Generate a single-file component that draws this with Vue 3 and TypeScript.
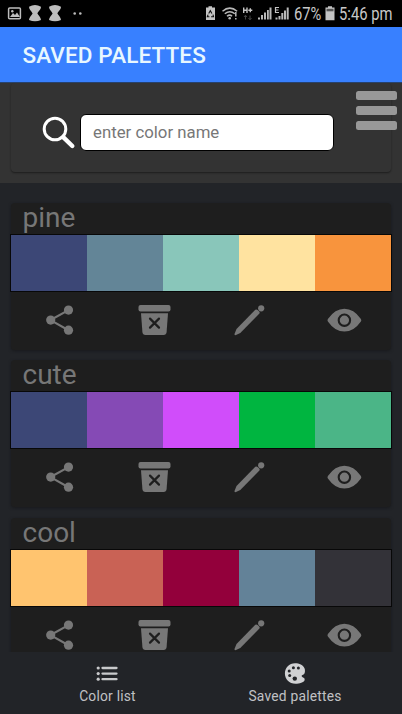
<script setup lang="ts">
interface Palette {
  name: string
  colors: string[]
}

const palettes: Palette[] = [
  { name: 'pine', colors: ['#3c4776', '#638597', '#89c6ba', '#ffe3a0', '#f8943d'] },
  { name: 'cute', colors: ['#3c4776', '#854ab5', '#d04dfa', '#00b540', '#4bb587'] },
  { name: 'cool', colors: ['#ffc46f', '#c96255', '#93003b', '#638298', '#333238'] },
]
</script>

<template>
  <div class="screen">
    <div class="status">
      <svg class="status-left" width="90" height="27" viewBox="0 0 90 27">
        <rect x="8.6" y="7.9" width="11.8" height="10.8" rx="1" fill="none" stroke="#bdbdbd" stroke-width="1.5" />
        <path d="M10 17l3-4 2 2 2-2.500 3 4.500z" fill="#bdbdbd" />
        <circle cx="12.300" cy="11.300" r="1.200" fill="#bdbdbd" />
        <g fill="#bdbdbd">
          <path d="M29 6.800q6-3.600 12 0c0 3-2.500 4.200-3.600 6.600 1.100 2.400 3.600 3.600 3.600 6.600q-6 2.500-12 0c0-3 2.500-4.200 3.600-6.600-1.100-2.400-3.600-3.600-3.600-6.600z" />
          <path d="M49 6.800q6-3.600 12 0c0 3-2.500 4.200-3.600 6.600 1.100 2.400 3.600 3.600 3.600 6.600q-6 2.500-12 0c0-3 2.500-4.200 3.600-6.600-1.100-2.400-3.600-3.600-3.600-6.600z" />
          <circle cx="74.700" cy="13.500" r="1.300" />
          <circle cx="80.300" cy="13.500" r="1.300" />
        </g>
      </svg>
      <svg class="signals" width="86" height="27" viewBox="204 0 86 27">
        <path d="M208.500 7.500V6.300h3.500v1.200h3V20h-9V7.500z" fill="#c4c4c4" />
        <path d="M208.700 13.500l1.600-2.800 1.600 2.800M213 14.700l.5 2.100h-2.400M209.400 16.800h-2.100l.8-2.200" fill="none" stroke="#111" stroke-width="1.100" />
        <g fill="none" stroke="#b8b8b8" stroke-width="1.500">
          <path d="M222.500 11.200q7.300-6.200 14.600 0M224.800 13.800q5-4.200 10 0M227 16.300q2.800-2.400 5 0" />
          <path d="M235.800 12v4.500M235.800 18v1.600" />
        </g>
        <circle cx="229.700" cy="18.300" r="1.300" fill="#b8b8b8" />
        <path d="M243.700 7.500v5.500M247 7.500v5.500M243.700 10.200h3.300M248.300 10.200h4M250.300 8.200v4" fill="none" stroke="#c4c4c4" stroke-width="1.400" />
        <path d="M245.500 15.500v4M244 17l1.500-1.800 1.500 1.800M250 15.500v4M248.500 18l1.500 1.800 1.500-1.800" fill="none" stroke="#444" />
        <g fill="#b8b8b8">
          <path d="M258 17.500h2v2h-2zM261 15h2v4.500h-2zM264 12.500h2v7h-2zM267 10h1.800v9.500H267zM269.500 7.500h2v12h-2z" />
          <path d="M275.500 17.500h2v2h-2zM278.500 16h2v3.500h-2zM281.300 13h2v6.500h-2zM284 10.500h2v9h-2zM286.700 7.500h2v12h-2z" />
        </g>
        <path d="M279 7.500h-3.500v5h3.500M275.500 10h3" fill="none" stroke="#c4c4c4" stroke-width="1.200" />
      </svg>
      <span class="percent">67%</span>
      <svg class="battery" width="10" height="27" viewBox="0 0 10 27">
        <path d="M3 7.500V6.300h4v1.200h2.500v12.700H.5V7.500z" fill="#c4c4c4" />
        <path d="M1.500 8.800h7v2.500h-7z" fill="#555" />
      </svg>
      <span class="clock">5:46 pm</span>
    </div>

    <header class="title-bar"><h1>SAVED PALETTES</h1></header>

    <section class="search">
      <div class="search-card">
        <svg class="search-icon" width="34" height="34" viewBox="0 0 34 34">
          <circle cx="13" cy="13" r="10.800" fill="none" stroke="#fff" stroke-width="3" />
          <path d="M21.200 21.200L30.300 30" stroke="#fff" stroke-width="4.400" stroke-linecap="round" />
        </svg>
        <input class="search-input" type="text" placeholder="enter color name" />
      </div>
      <button class="menu" aria-label="Menu"><i /><i /><i /></button>
    </section>

    <main class="list">
      <article v-for="palette in palettes" :key="palette.name" class="card">
        <h2>{{ palette.name }}</h2>
        <div class="swatches">
          <span v-for="color in palette.colors" :key="color" :style="{ background: color }" />
        </div>
        <div class="actions">
          <button aria-label="Share">
            <svg width="36" height="36" viewBox="0 0 36 36">
              <path d="M27.500 8.100L9.500 18.100l18 10.100" fill="none" stroke="#777" stroke-width="2.200" />
              <g fill="#777">
                <circle cx="27.500" cy="8.100" r="4.600" />
                <circle cx="9.700" cy="18.100" r="4.600" />
                <circle cx="27.500" cy="28.200" r="4.600" />
              </g>
            </svg>
          </button>
          <button aria-label="Delete">
            <svg width="36" height="36" viewBox="0 0 36 36">
              <rect x="2.500" y="3" width="32" height="6.600" rx="2" fill="#777" />
              <path d="M5 11.200h27l-1.400 18.800q-.3 3-3 3H9.400q-2.700 0-3-3z" fill="#777" />
              <path d="M14 16.600l9 9M23 16.600l-9 9" stroke="#1e1e1e" stroke-width="2.200" stroke-linecap="round" />
            </svg>
          </button>
          <button aria-label="Edit">
            <svg width="36" height="36" viewBox="0 0 36 36">
              <path d="M24.300 7.800q1.200-.8 2.300.2l1.600 1.600q1 1.100 0 2.200L9.300 30.900 5 33q-1.800.6-1.400-1.300l1.900-4.800z" fill="#777" />
              <circle cx="30.200" cy="6.300" r="3.100" fill="#777" />
            </svg>
          </button>
          <button aria-label="View">
            <svg width="36" height="36" viewBox="0 0 36 36">
              <path d="M1.900 17Q9 6.800 18.400 6.800T34.900 17q.9 1.200 0 2.400Q27.800 29.600 18.400 29.600T1.900 19.400q-.9-1.200 0-2.400z" fill="#777" />
              <circle cx="18.400" cy="18.200" r="5.700" fill="none" stroke="#1e1e1e" stroke-width="2.100" />
            </svg>
          </button>
        </div>
      </article>
    </main>

    <nav class="tabs">
      <a class="tab">
        <svg width="22" height="22" viewBox="0 0 22 22">
          <path d="M6.500 5h14M6.500 10.600h14M6.500 16.200h14" stroke="#c8c9cb" stroke-width="2.300" stroke-linecap="round" />
          <g fill="#c8c9cb"><circle cx="2.200" cy="5" r="1.600" /><circle cx="2.200" cy="10.600" r="1.600" /><circle cx="2.200" cy="16.200" r="1.600" /></g>
        </svg>
        <span>Color list</span>
      </a>
      <a class="tab">
        <svg width="22" height="22" viewBox="0 0 22 22">
          <path d="M20.800 6C19.200 1.900 15.200.3 11 .3 5.200.3.900 4.900.9 10.500S5.300 20.700 11.500 20.700c4 0 8.400-1.500 9.100-3.500.5-1.600-.7-2.300-2-2.900-1.500-.7-1.200-2.200.4-2.500 1.500-.3 2.400-2.600 1.800-5.800z" fill="#d0d1d3" />
          <g fill="#222428"><circle cx="9.400" cy="4.800" r="1.500" /><circle cx="14.400" cy="5" r="1.500" /><circle cx="5.200" cy="7.900" r="1.500" /><circle cx="5.700" cy="12.500" r="1.500" /><circle cx="10.800" cy="15.600" r="2.200" /></g>
        </svg>
        <span>Saved palettes</span>
      </a>
    </nav>
  </div>
</template>

<style>
body { margin: 0; background: #222428; }
</style>

<style scoped>
.screen {
  box-sizing: border-box;
  display: flex;
  flex-direction: column;
  width: 402px;
  height: 714px;
  overflow: hidden;
  background: #222428;
  font-family: Roboto, "Liberation Sans", sans-serif;
}
.status {
  display: flex;
  flex: none;
  height: 27px;
  background: #000;
  color: #c8c8c8;
  font-size: 17.500px;
  line-height: 28px;
  white-space: nowrap;
}
.status-left { margin-right: 114px; flex: none; }
.signals { flex: none; margin-right: 4px; }
.percent, .clock { transform-origin: left center; }
.percent { width: 31px; transform: scaleX(0.84); }
.battery { flex: none; margin-right: 4px; }
.clock { width: 60px; transform: scaleX(0.845); }
.title-bar {
  display: flex;
  flex: none;
  align-items: center;
  height: 56px;
  padding-left: 22.500px;
  box-sizing: border-box;
  background: #3880ff;
  border-bottom: 1px solid #28436e;
}
h1 { margin: 0; color: #e8f7ff; font-size: 22.500px; font-weight: 500; line-height: 28px; letter-spacing: 0.12px; }
.search {
  position: relative;
  flex: none;
  height: 100px;
  padding: 0 11px 11px;
  box-sizing: border-box;
  background: #333;
}
.search-card {
  display: flex;
  height: 89px;
  padding: 31px 0 0 31px;
  box-sizing: border-box;
  border-radius: 4px;
  box-shadow: 0 1px 2px rgba(0, 0, 0, 0.45);
}
.search-icon { flex: none; margin: 2px 4px 0 0; }
.search-input {
  width: 254px;
  height: 37px;
  box-sizing: border-box;
  padding: 0 11px 2px 12px;
  border: 1px solid #000;
  border-radius: 6px;
  background: #fff;
  font: 16.800px Roboto, sans-serif;
}
.search-input::placeholder { color: #777; }
button { padding: 0; border: 0; background: none; }
.menu {
  position: absolute;
  top: 8px;
  right: 5px;
  display: flex;
  flex-direction: column;
  gap: 6px;
  width: 41px;
}
.menu i { height: 9px; border-radius: 2.500px; background: #989898; }
.list {
  display: flex;
  flex: 1;
  flex-direction: column;
  gap: 10.300px;
  min-height: 0;
  padding: 20px 11px 0;
  overflow: hidden;
}
.card {
  flex: none;
  height: 147px;
  border-radius: 4px;
  background: #1e1e1e;
  box-shadow: 0 1px 3px rgba(20, 20, 24, 0.7);
}
h2 {
  height: 32px;
  margin: 0;
  padding-left: 11.500px;
  color: #777;
  font-size: 28px;
  font-weight: 400;
  line-height: 30px;
}
.swatches {
  display: grid;
  grid-template-columns: repeat(5, 1fr);
  height: 56px;
  box-shadow: 0 0 0 1px #080808;
}
.actions { display: grid; grid-template-columns: repeat(4, 1fr); height: 58px; }
.actions button { display: flex; align-items: center; justify-content: center; }
.tabs {
  display: grid;
  flex: none;
  grid-template-columns: 214px 161px;
  height: 62px;
  background: #222428;
}
.tab { display: flex; flex-direction: column; align-items: center; padding-top: 11px; }
.tab svg { flex: none; }
.tab span { padding-left: 1px; margin-top: 1px; color: #c0c1c4; font-size: 13.800px; line-height: 20px; letter-spacing: 0.22px; }
</style>
